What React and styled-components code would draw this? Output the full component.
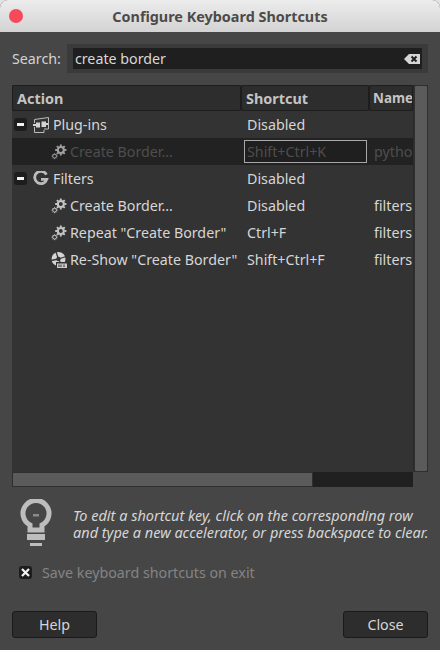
import React from "react";
import styled, { createGlobalStyle } from "styled-components";

const GlobalStyle = createGlobalStyle`
  html, body {
    margin: 0;
    padding: 0;
    background: #e4e4e4;
  }
  body {
    font-family: "Noto Sans", "Open Sans", sans-serif;
    font-size: 14.25px;
  }
`;

const Window = styled.div`
  width: 440px;
  height: 650px;
  display: flex;
  flex-direction: column;
  background: #464646;
  border-radius: 8px 8px 0 0;
  overflow: hidden;
`;

const TitleBar = styled.header`
  height: 32px;
  flex: none;
  display: grid;
  grid-template-columns: 40px 1fr 40px;
  align-items: center;
  background: linear-gradient(#ececec, #d3d3d3);
`;

const CloseDot = styled.span`
  width: 14px;
  height: 14px;
  margin-left: 9px;
  border-radius: 50%;
  background: #f44a5a;
`;

const Title = styled.h1`
  margin: 0;
  text-align: center;
  font-size: 14.4px;
  font-weight: 700;
  color: #4e4a48;
`;

const Body = styled.div`
  flex: 1;
  display: flex;
  flex-direction: column;
  padding: 12px;
  min-height: 0;
`;

const SearchRow = styled.div`
  display: flex;
  align-items: center;
  gap: 6px;
  height: 29px;
  color: #d3d3d3;
`;

const SearchBox = styled.div`
  flex: 1;
  height: 21px;
  display: flex;
  align-items: center;
  justify-content: space-between;
  padding: 0 2px;
  background: #1f1f1f;
  border: solid #3a3a3a;
  border-width: 4px 6px;
  color: #d8d8d8;
`;

const TreeWrap = styled.div`
  margin-top: 12px;
  display: grid;
  grid-template-columns: 401px 15px;
  grid-template-rows: 387px 15px;
`;

const TreePane = styled.div`
  background: #333333;
  overflow: hidden;
`;

const Head = styled.div`
  display: grid;
  grid-template-columns: 229px 128px 44px;
  height: 26px;
  background: #2d2d2d;
`;

const HeadCell = styled.div`
  display: flex;
  align-items: center;
  padding-left: ${(p) => (p.$narrow ? "3px" : "4px")};
  border: 1px solid #1d1d1d;
  border-radius: 2px;
  font-weight: 700;
  font-size: ${(p) => (p.$narrow ? "13.4px" : "14.4px")};
  color: #c4c4c4;
  overflow: hidden;
  white-space: nowrap;
`;

const Row = styled.div`
  display: grid;
  grid-template-columns: 230px 127px 44px;
  height: 27px;
  align-items: center;
  color: ${(p) => (p.$dim ? "#4e4e4e" : "#d6d6d6")};
  background: ${(p) => (p.$dim ? "#222222" : "transparent")};
  white-space: nowrap;
  overflow: hidden;
`;

const ActionCell = styled.div`
  display: flex;
  align-items: center;
  padding-left: ${(p) => (p.$child ? "39px" : "2px")};
  gap: ${(p) => (p.$child ? "3px" : "4px")};
`;

const ShortcutCell = styled.div`
  padding-left: 5px;
`;

const EditBox = styled.div`
  margin: 0 2px;
  height: 21px;
  padding-left: 2px;
  line-height: 21px;
  border: 1px solid #a8a8a8;
  background: #1f1f1f;
`;

const NameCell = styled.div`
  padding-left: 5px;
  overflow: hidden;
`;

const Expander = styled.span`
  width: 13px;
  height: 13px;
  flex: none;
  margin-right: 2px;
  display: flex;
  align-items: center;
  justify-content: center;
  border-radius: 3px;
  background: #1d1d1d;
  &::before {
    content: "";
    width: 7px;
    height: 3px;
    background: #f2f2f2;
  }
`;

const VTrack = styled.div`
  background: #2b2b2b;
  display: flex;
  justify-content: flex-end;
`;

const VThumb = styled.div`
  width: 14px;
  margin-left: 1px;
  height: 100%;
  background: #5b5b5b;
  border: 1px solid #2f2f2f;
  border-radius: 2px;
  box-sizing: border-box;
`;

const HTrack = styled.div`
  background: #202020;
  display: flex;
`;

const HThumb = styled.div`
  width: 301px;
  height: 100%;
  box-sizing: border-box;
  background: #5b5b5b;
  border: 1px solid #2f2f2f;
`;

const Hint = styled.div`
  display: flex;
  align-items: center;
  margin-top: 12px;
  padding-left: 8px;
  gap: 21px;
`;

const HintText = styled.p`
  margin: 0;
  font-style: italic;
  font-size: 14.5px;
  line-height: 17px;
  color: #d6d6d6;
  white-space: nowrap;
`;

const SaveRow = styled.label`
  display: flex;
  align-items: center;
  gap: 10px;
  margin-top: 14px;
  padding-left: 7px;
  color: #848484;
`;

const Check = styled.span`
  width: 13px;
  height: 13px;
  border-radius: 3px;
  background: #1d1d1d;
  display: flex;
  align-items: center;
  justify-content: center;
`;

const Footer = styled.footer`
  margin-top: auto;
  display: flex;
  justify-content: space-between;
`;

const Button = styled.button`
  width: 85px;
  height: 27px;
  padding: 0;
  font: inherit;
  color: #d6d6d6;
  background: #2d2d2d;
  border: 1px solid #1a1a1a;
  border-radius: 3px;
`;

const Backspace = () => (
  <svg width="16" height="12" viewBox="0 0 16 12">
    <path d="M0 6 L5 1 H16 V11 H5 Z" fill="#d6d6d6" />
    <path d="M7.5 3.5 L12.5 8.5 M12.5 3.5 L7.5 8.5" stroke="#1f1f1f" strokeWidth="2" />
  </svg>
);

const Gears = ({ dim }) => (
  <svg width="16" height="16" viewBox="0 0 16 16" style={{ flex: "none" }}>
    <g fill="none" stroke={dim ? "#a0a0a0" : "#c4c4c4"}>
      <circle cx="9.8" cy="6" r="3" strokeWidth="2.1" />
      <path
        d="M9.8 .4 V2.4 M9.8 9.6 V11.6 M4.2 6 H6.2 M13.4 6 H15.4 M5.9 2.1 L7.2 3.4 M12.4 8.6 L13.7 9.9 M13.7 2.1 L12.4 3.4 M7.2 8.6 L5.9 9.9"
        strokeWidth="1.9"
      />
      <circle cx="3.6" cy="12.2" r="1.9" strokeWidth="1" />
      <path
        d="M3.6 9.2 V10.2 M3.6 14.2 V15.2 M.6 12.2 H1.6 M5.6 12.2 H6.6 M1.5 10.1 L2.2 10.8 M5 13.6 L5.7 14.3 M5.7 10.1 L5 10.8 M2.2 13.6 L1.5 14.3"
        strokeWidth="1"
      />
    </g>
  </svg>
);

const PluginIcon = () => (
  <svg width="16" height="16" viewBox="0 0 16 16" style={{ flex: "none" }}>
    <path d="M1.5 6 V2.5 L15.5 .5 V12 H11 M1.5 10 V15.5 H11 V13" fill="none" stroke="#bcbcbc" />
    <path d="M0 7 H3 V5.5 H7 V10.5 H3 V9 H0 Z" fill="#d4d4d4" />
    <path d="M8.5 4.5 H13 V6 H15 V8 H13 V10 H8.5 Z" fill="#d4d4d4" />
  </svg>
);

const GimpIcon = () => (
  <svg width="16" height="16" viewBox="0 0 16 16" style={{ flex: "none" }}>
    <path
      d="M13.4 3.6 A6.2 6.2 0 1 0 13.8 8.4 H8"
      fill="none"
      stroke="#bcbcbc"
      strokeWidth="2.8"
    />
  </svg>
);

const ReShowIcon = () => (
  <svg width="16" height="16" viewBox="0 0 16 16" style={{ flex: "none" }}>
    <circle cx="7.5" cy="7" r="7" fill="#d4d4d4" />
    <path d="M7.5 7 L5 0 M7.5 7 L0 8.5 M7.5 7 L11 14 M7.5 7 L15 4.5" stroke="#333333" strokeWidth="1.3" />
    <circle cx="7.5" cy="7" r="2.2" fill="#333333" />
    <rect x="5" y="10" width="11" height="6" fill="#333333" />
    <rect x="6" y="11.5" width="10" height="4.5" fill="#c8c8c8" />
    <path d="M8 12.5 V15 M10 12.5 V15 M13 12.5 V15" stroke="#333333" />
  </svg>
);

const Bulb = () => (
  <svg width="32" height="50" viewBox="0 0 32 50" style={{ flex: "none" }}>
    <path
      d="M10 31 V26 A13 13 0 1 1 22 26 V31 Z"
      fill="none"
      stroke="#bdbdbd"
      strokeWidth="5"
    />
    <rect x="13" y="15" width="6" height="2.5" fill="#8a8a8a" />
    <rect x="7" y="35" width="18" height="6" fill="#bdbdbd" />
    <rect x="10" y="44" width="12" height="3" fill="#bdbdbd" />
  </svg>
);

const App = () => (
  <>
    <GlobalStyle />
    <Window>
      <TitleBar>
        <CloseDot />
        <Title>Configure Keyboard Shortcuts</Title>
      </TitleBar>
      <Body>
        <SearchRow>
          <span>Search:</span>
          <SearchBox>
            create border
            <Backspace />
          </SearchBox>
        </SearchRow>

        <TreeWrap>
          <TreePane>
            <Head>
              <HeadCell>Action</HeadCell>
              <HeadCell>Shortcut</HeadCell>
              <HeadCell $narrow>Name</HeadCell>
            </Head>
            <Row>
              <ActionCell>
                <Expander />
                <PluginIcon />
                Plug-ins
              </ActionCell>
              <ShortcutCell>Disabled</ShortcutCell>
            </Row>
            <Row $dim>
              <ActionCell $child>
                <Gears dim />
                Create Border...
              </ActionCell>
              <EditBox>Shift+Ctrl+K</EditBox>
              <NameCell>python</NameCell>
            </Row>
            <Row>
              <ActionCell>
                <Expander />
                <GimpIcon />
                Filters
              </ActionCell>
              <ShortcutCell>Disabled</ShortcutCell>
            </Row>
            <Row>
              <ActionCell $child>
                <Gears />
                Create Border...
              </ActionCell>
              <ShortcutCell>Disabled</ShortcutCell>
              <NameCell>filters</NameCell>
            </Row>
            <Row>
              <ActionCell $child>
                <Gears />
                Repeat "Create Border"
              </ActionCell>
              <ShortcutCell>Ctrl+F</ShortcutCell>
              <NameCell>filters</NameCell>
            </Row>
            <Row>
              <ActionCell $child>
                <ReShowIcon />
                Re-Show "Create Border"
              </ActionCell>
              <ShortcutCell>Shift+Ctrl+F</ShortcutCell>
              <NameCell>filters</NameCell>
            </Row>
          </TreePane>
          <VTrack>
            <VThumb />
          </VTrack>
          <HTrack>
            <HThumb />
          </HTrack>
        </TreeWrap>

        <Hint>
          <Bulb />
          <HintText>
            To edit a shortcut key, click on the corresponding row
            <br />
            and type a new accelerator, or press backspace to clear.
          </HintText>
        </Hint>

        <SaveRow>
          <Check>
            <svg width="9" height="9" viewBox="0 0 9 9">
              <path d="M1 1 L8 8 M8 1 L1 8" stroke="#f4f4f4" strokeWidth="2.2" />
            </svg>
          </Check>
          Save keyboard shortcuts on exit
        </SaveRow>

        <Footer>
          <Button>Help</Button>
          <Button>Close</Button>
        </Footer>
      </Body>
    </Window>
  </>
);

export default App;
